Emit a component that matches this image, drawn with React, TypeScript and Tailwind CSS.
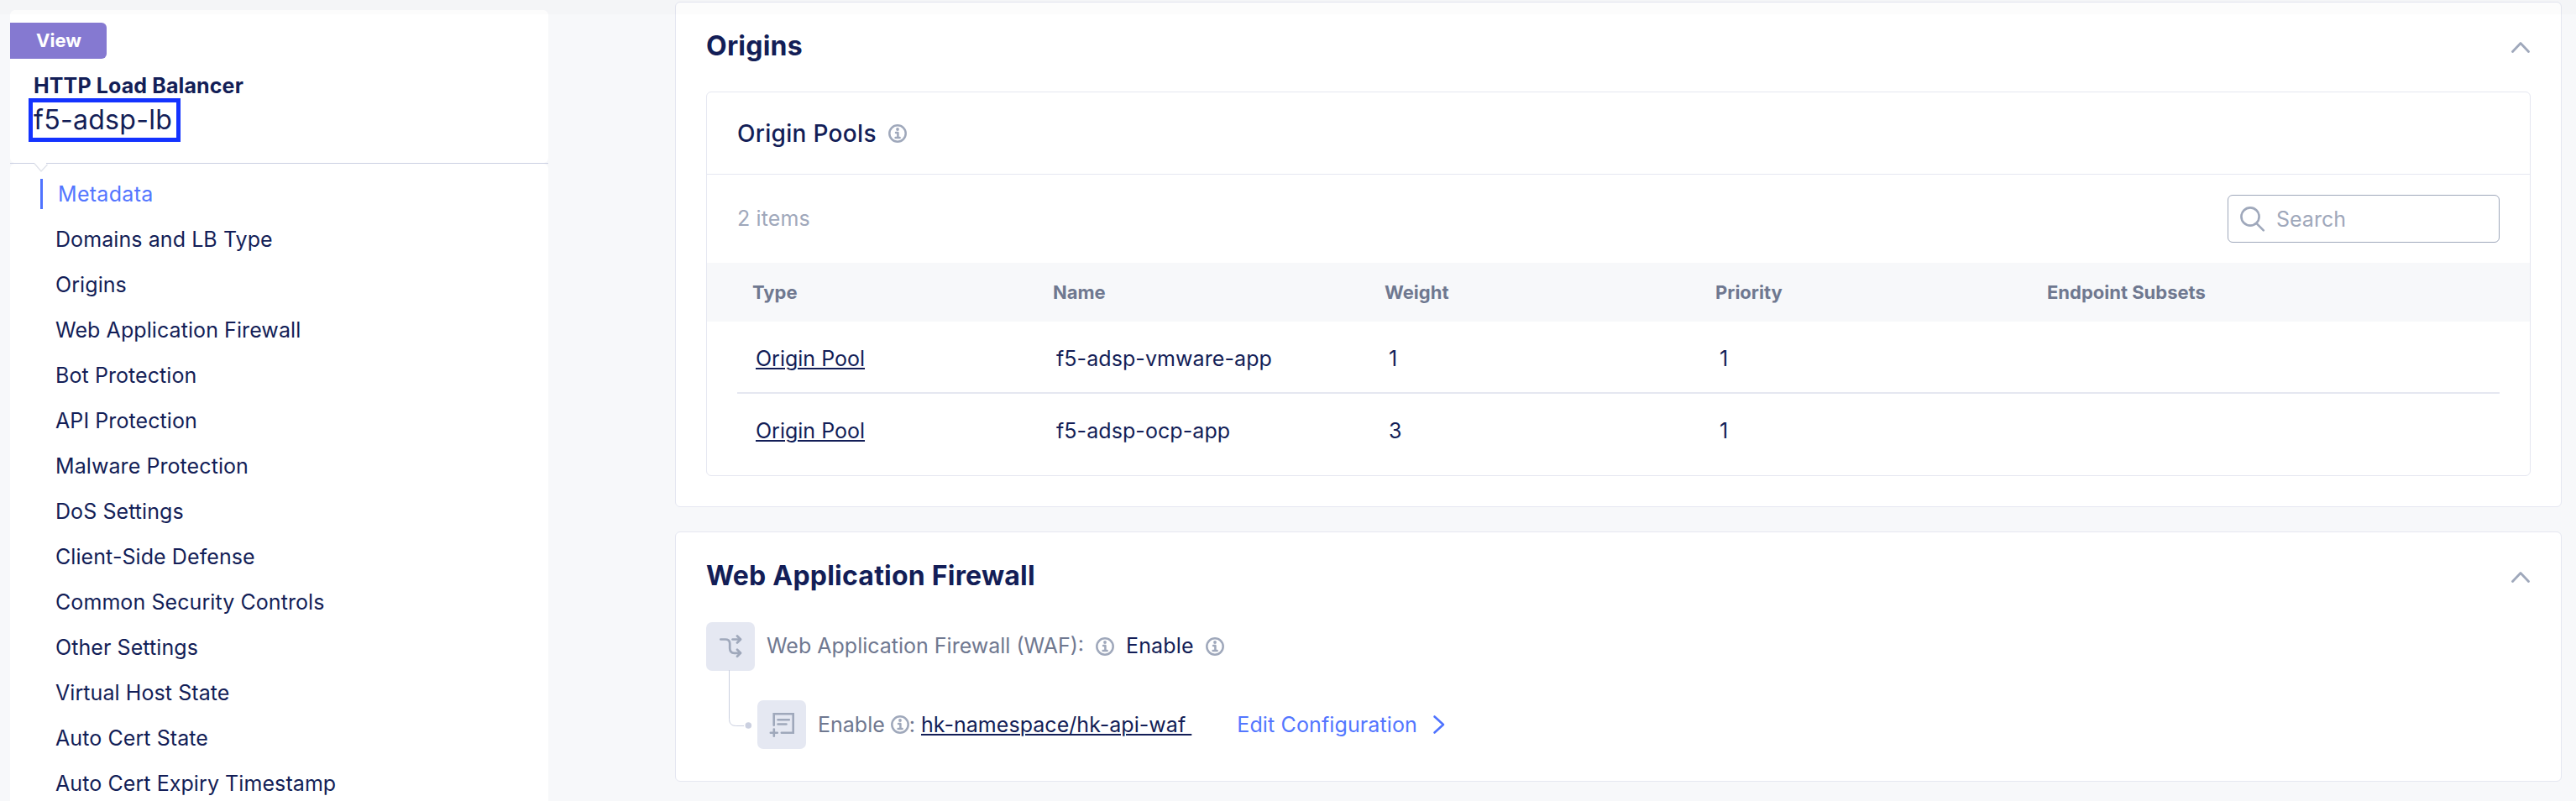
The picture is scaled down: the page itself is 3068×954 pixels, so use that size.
import type { ReactNode } from "react";

const sections = [
  "Metadata",
  "Domains and LB Type",
  "Origins",
  "Web Application Firewall",
  "Bot Protection",
  "API Protection",
  "Malware Protection",
  "DoS Settings",
  "Client-Side Defense",
  "Common Security Controls",
  "Other Settings",
  "Virtual Host State",
  "Auto Cert State",
  "Auto Cert Expiry Timestamp",
];

const columns = ["Type", "Name", "Weight", "Priority", "Endpoint Subsets"];

const pools = [
  { type: "Origin Pool", name: "f5-adsp-vmware-app", weight: 1, priority: 1 },
  { type: "Origin Pool", name: "f5-adsp-ocp-app", weight: 3, priority: 1 },
];

function InfoIcon() {
  return (
    <svg className="size-[22px] shrink-0" viewBox="0 0 22 22" fill="none" stroke="#9fa8bb">
      <circle cx="11" cy="11" r="9.7" strokeWidth="2.5" />
      <circle cx="11" cy="6" r="1.9" fill="#9fa8bb" stroke="none" />
      <path d="M9 10.1h2.400v5.800M8.600 16h5" strokeWidth="2.500" strokeLinecap="round" strokeLinejoin="round" />
    </svg>
  );
}

function ChevronUp() {
  return (
    <svg className="mt-[3px] h-[14px] w-[24px]" viewBox="0 0 24 14" fill="none" stroke="#9fa8bb" strokeWidth="2.8" strokeLinecap="round" strokeLinejoin="round">
      <path d="M2.500 12.500 12 2.500l9.500 10" />
    </svg>
  );
}

function BranchIcon() {
  return (
    <svg className="size-[58px]" viewBox="0 0 58 58" fill="none" stroke="#9fa8bb" strokeWidth="2.700" strokeLinecap="round" strokeLinejoin="round">
      <path d="M17.300 20.500h5.700c3.800 0 5.200 1.600 5.200 5v5.500c0 4 1.700 5.800 5.400 5.800h7" />
      <path d="M31.500 20.500h9" />
      <path d="M37 16.500l4 4-4 4M37 32.800l4 4-4 4" />
    </svg>
  );
}

function AddNoteIcon() {
  return (
    <svg className="size-[58px]" viewBox="0 0 58 58" fill="none" stroke="#9fa8bb" strokeWidth="2.600" strokeLinecap="round">
      <path d="M19.700 29.800V16.200h23v22.600H28.800" strokeLinejoin="miter" />
      <path d="M24.500 23.200h13.300M24.500 28.500h10" />
      <path d="M15.800 38.800h8M19.800 34.600v8.200" />
    </svg>
  );
}

function IconTile({ children }: { children: ReactNode }) {
  return <div className="flex h-[58px] w-[58px] shrink-0 items-center justify-center rounded-[7px] bg-[#e5e8f2]">{children}</div>;
}

function Panel({ title, className, children }: { title: string; className: string; children: ReactNode }) {
  return (
    <section className={`rounded-[6px] border border-[#e5e7f1] bg-white px-9 ${className}`}>
      <header className="mt-[21px] flex h-[60px] items-center justify-between">
        <h2 className="pt-[2px] text-[32px] font-bold leading-[60px] tracking-[0.22px]">{title}</h2>
        <ChevronUp />
      </header>
      {children}
    </section>
  );
}

function Sidebar() {
  return (
    <aside className="mt-3 flex w-[641px] shrink-0 flex-col">
      <div className="shrink-0 rounded-[6px] bg-white">
        <div className="mt-[15px] flex h-[43px] w-[115px] items-center justify-center rounded-r-[6px] bg-[#8579d1] pl-px text-[22px] font-bold text-white">
          View
        </div>
        <div className="mt-4 pl-[28px] text-[25px] font-bold leading-8 tracking-[0.12px]">HTTP Load Balancer</div>
        <div className="-mt-px mb-[25px] ml-[22px] flex h-[52px] w-[181px] items-center whitespace-nowrap border-[5px] border-[#1433ff] pl-[1px] text-[32px] tracking-[0.3px]">
          f5-adsp-lb
        </div>
      </div>
      <div className="relative h-px shrink-0 bg-[#cbd0e2]">
        <svg className="absolute -top-px left-[28px] h-[13px] w-[18px]" viewBox="0 0 18 13">
          <path d="M1 0h14v2.500L9 11 1 1.500z" fill="#fff" />
          <path d="M1 1.800 9 11l7.500-8" fill="none" stroke="#dfe2ea" strokeWidth="1.300" />
        </svg>
      </div>
      <nav className="flex-1 rounded-t-[6px] bg-white pt-[9px] text-[25px] tracking-[0.08px]">
        {sections.map((label, i) =>
          i === 0 ? (
            <div key={label} className="flex h-[54px] items-center pl-9 tracking-[0.3px] text-[#5376ff]">
              <span className="mr-[18px] h-9 w-[3px] bg-[#4f73ff]" />
              <span className="pt-px">{label}</span>
            </div>
          ) : (
            <div key={label} className="h-[54px] pl-[54px] leading-[54px]">
              {label}
            </div>
          ),
        )}
      </nav>
    </aside>
  );
}

function OriginPools() {
  return (
    <div className="mt-[25px] rounded-[6px] border border-[#e5e7f1] pb-[13px]">
      <div className="flex h-[98px] items-center gap-[14px] border-b border-[#e5e7f1] pl-9">
        <h3 className="text-[28px] font-medium tracking-[0.3px]">Origin Pools</h3>
        <InfoIcon />
      </div>
      <div className="flex h-[105px] items-center justify-between px-9 text-[25px] text-[#9fa8bb]">
        <span className="tracking-[0.12px]">2 items</span>
        <div className="flex h-[57px] w-[324px] items-center rounded-[6px] border border-[#9fa8bb] pl-[14px]">
          <svg className="size-[30px]" viewBox="0 0 30 30" fill="none" stroke="#9fa8bb" strokeWidth="2.600" strokeLinecap="round">
            <circle cx="12" cy="12" r="10.600" />
            <path d="M19.800 20.300l8 8" />
          </svg>
          <span className="ml-[13px] pt-[2px]">Search</span>
        </div>
      </div>
      <div className="grid h-[70px] grid-cols-[358px_395px_394px_395px_1fr] items-center bg-[#f7f8fa] pl-[54px] text-[22px] font-bold text-[#6f7890]">
        {columns.map((c) => (
          <span key={c}>{c}</span>
        ))}
      </div>
      <div className="mx-9 text-[25px] tracking-[0.08px]">
        {pools.map((p, i) => (
          <div
            key={p.name}
            className={`grid grid-cols-[358px_396px_394px_395px_1fr] items-center pl-[22px] pt-[6px] ${i === 0 ? "h-[86px] border-b-2 border-[#e5e7f1]" : "h-[84px]"}`}
          >
            <span>
              <a className="tracking-normal underline decoration-2 underline-offset-[2px]">{p.type}</a>
            </span>
            <span>{p.name}</span>
            <span>{p.weight}</span>
            <span>{p.priority}</span>
          </div>
        ))}
      </div>
    </div>
  );
}

function Firewall() {
  return (
    <div className="mt-[26px] text-[25px]">
      <div className="flex h-[57px] items-center">
        <IconTile>
          <BranchIcon />
        </IconTile>
        <span className="ml-[14px] text-[#6f7890]">Web Application Firewall (WAF):</span>
        <span className="ml-[14px] mr-[14px] flex">
          <InfoIcon />
        </span>
        <span className="tracking-[0.12px]">Enable</span>
        <span className="ml-[14px] flex">
          <InfoIcon />
        </span>
      </div>
      <div className="flex">
        <svg className="h-[94px] w-[61px]" viewBox="0 0 61 94" fill="none">
          <path d="M27.500 0v58.500q0 8 8 8H45" stroke="#cbd0e0" />
          <circle cx="50.300" cy="66" r="3.800" fill="#cbd0e0" />
        </svg>
        <div className="flex h-[58px] items-center self-end">
          <IconTile>
            <AddNoteIcon />
          </IconTile>
          <span className="ml-[14px] pt-px text-[#6f7890]">Enable</span>
          <span className="ml-[7px] flex">
            <InfoIcon />
          </span>
          <span className="pt-px text-[#6f7890]">:</span>
          <a className="ml-[7px] whitespace-pre pt-px tracking-[0.04px] underline decoration-2 underline-offset-[2px]">{"hk-namespace/hk-api-waf "}</a>
          <span className="ml-[54px] pt-px tracking-[0.12px] text-[#5376ff]">Edit Configuration</span>
          <svg className="ml-[18px] h-[24px] w-[16px]" viewBox="0 0 16 24" fill="none" stroke="#4f73ff" strokeWidth="2.600" strokeLinecap="round" strokeLinejoin="round">
            <path d="M2.500 2.500 13 12 2.500 21.500" />
          </svg>
        </div>
      </div>
    </div>
  );
}

export default function App() {
  return (
    <div className="relative flex h-[954px] w-[3068px] overflow-hidden bg-[#f7f8fa] pl-3 font-['Inter',sans-serif] text-[#131e57]">
      <Sidebar />
      <main className="ml-[151px] mt-[2px] flex w-[2247px] flex-col gap-[29px]">
        <Panel title="Origins" className="h-[602px]">
          <OriginPools />
        </Panel>
        <Panel title="Web Application Firewall" className="h-[298px]">
          <Firewall />
        </Panel>
      </main>
      <div className="pointer-events-none absolute inset-x-0 top-0 h-[17px] bg-black/[0.01]" />
    </div>
  );
}
